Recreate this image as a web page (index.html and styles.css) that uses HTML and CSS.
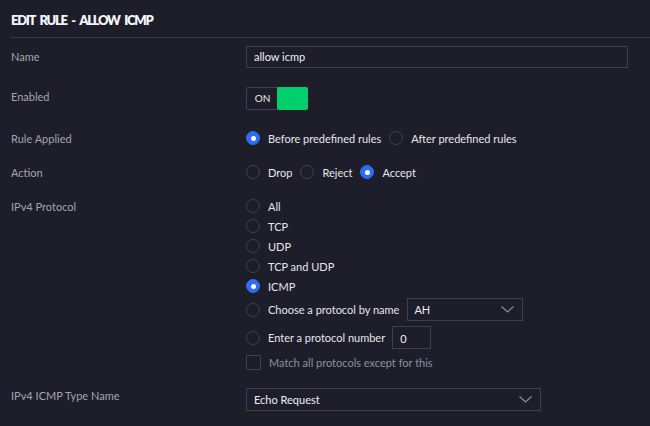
FILE: index.html
```html
<!DOCTYPE html>
<html>
<head>
<meta charset="utf-8">
<link rel="stylesheet" href="styles.css">
</head>
<body>
<div class="panel">
  <h1 class="title">EDIT RULE - ALLOW ICMP</h1>
  <div class="form">
    <div class="row row-name">
      <div class="label">Name</div>
      <div class="control"><div class="textbox wide">allow icmp</div></div>
    </div>
    <div class="row row-enabled">
      <div class="label lbl-0">Enabled</div>
      <div class="control">
        <div class="toggle"><span class="toggle-text">ON</span><span class="toggle-knob"></span></div>
      </div>
    </div>
    <div class="row row-applied">
      <div class="label">Rule Applied</div>
      <div class="control inline">
        <div class="opt"><span class="radio on"></span><span class="opt-text">Before predefined rules</span></div>
        <div class="opt"><span class="radio"></span><span class="opt-text">After predefined rules</span></div>
      </div>
    </div>
    <div class="row row-action">
      <div class="label">Action</div>
      <div class="control inline">
        <div class="opt"><span class="radio"></span><span class="opt-text">Drop</span></div>
        <div class="opt"><span class="radio"></span><span class="opt-text">Reject</span></div>
        <div class="opt"><span class="radio on"></span><span class="opt-text">Accept</span></div>
      </div>
    </div>
    <div class="row row-proto">
      <div class="label">IPv4 Protocol</div>
      <div class="control stack">
        <div class="opt"><span class="radio"></span><span class="opt-text">All</span></div>
        <div class="opt"><span class="radio"></span><span class="opt-text">TCP</span></div>
        <div class="opt"><span class="radio"></span><span class="opt-text">UDP</span></div>
        <div class="opt"><span class="radio"></span><span class="opt-text">TCP and UDP</span></div>
        <div class="opt"><span class="radio on"></span><span class="opt-text">ICMP</span></div>
        <div class="opt opt-choose"><span class="radio"></span><span class="opt-text">Choose a protocol by name</span>
          <div class="select sel-ah"><span>AH</span>
            <svg class="chev" width="13" height="7" viewBox="0 0 13 7"><path d="M0.5 0.5 L6.5 6 L12.5 0.5" fill="none" stroke="#8d929c" stroke-width="1.1"/></svg>
          </div>
        </div>
        <div class="opt opt-enter"><span class="radio"></span><span class="opt-text">Enter a protocol number</span>
          <div class="textbox num">0</div>
        </div>
        <div class="opt opt-check"><span class="checkbox"></span><span class="opt-text dim">Match all protocols except for this</span></div>
      </div>
    </div>
    <div class="row row-icmp">
      <div class="label lbl-up">IPv4 ICMP Type Name</div>
      <div class="control">
        <div class="select sel-echo"><span>Echo Request</span>
          <svg class="chev" width="13" height="7" viewBox="0 0 13 7"><path d="M0.5 0.5 L6.5 6 L12.5 0.5" fill="none" stroke="#8d929c" stroke-width="1.1"/></svg>
        </div>
      </div>
    </div>
  </div>
</div>
</body>
</html>
```
FILE: styles.css
```css
html, body {
  margin: 0;
  padding: 0;
  background: #1e1e2b;
}
body {
  width: 650px;
  height: 426px;
  overflow: hidden;
  font-family: Lato, "Noto Sans", sans-serif;
  font-size: 11px;
  color: #e4e6ea;
}
.panel {
  padding-left: 11px;
}
.title {
  margin: 0;
  padding: 12px 0 8px 0;
  font-size: 13px;
  line-height: 17px;
  font-weight: 800;
  letter-spacing: -1.3px;
  word-spacing: 3px;
  color: #f4f5f7;
  border-bottom: 1px solid #393b48;
}
.form {
  display: flex;
  flex-direction: column;
}
.row {
  display: grid;
  grid-template-columns: 235px 1fr;
  align-items: start;
}
.label {
  color: #a1a5ae;
  line-height: 20px;
  margin-top: 1px;
  margin-bottom: -1px;
}
.lbl-0 { margin-top: 0; margin-bottom: 0; }
.lbl-up { margin-top: -2px; margin-bottom: 0; }
.row-name { margin-top: 8px; }
.row-enabled { margin-top: 19px; }
.row-applied { margin-top: 18px; }
.row-action { margin-top: 14px; }
.row-proto { margin-top: 14px; }
.row-icmp { margin-top: 16px; }

.textbox {
  box-sizing: border-box;
  border: 1px solid #3a424e;
  height: 22px;
  line-height: 20px;
  padding-left: 7px;
  color: #eef0f2;
}
.wide { width: 382px; }
.num {
  width: 39px;
  height: 23px;
  line-height: 23px;
  margin-left: 7px;
}

.toggle {
  display: flex;
  width: 62px;
  height: 23px;
  box-sizing: border-box;
  border: 1px solid #3d4450;
  border-radius: 2px;
}
.toggle-text {
  width: 29px;
  line-height: 21px;
  text-align: center;
  font-size: 10px;
  color: #e8eaed;
  padding-left: 1px;
}
.toggle-knob {
  flex: 1;
  margin: -1px -1px -1px 0;
  background: #00cf6b;
  border-radius: 2px;
}

.control.inline {
  display: flex;
  gap: 8px;
}
.control.stack {
  display: flex;
  flex-direction: column;
}
.opt {
  display: flex;
  align-items: center;
  height: 20px;
}
.opt-text {
  margin-left: 8px;
  white-space: nowrap;
}
.dim { color: #8c919b; }
.radio {
  box-sizing: border-box;
  width: 14px;
  height: 14px;
  border-radius: 50%;
  border: 1px solid #3b4350;
  flex: none;
}
.radio.on {
  background: #2e6cf5;
  border-color: #2e6cf5;
  display: flex;
  align-items: center;
  justify-content: center;
}
.radio.on::after {
  content: "";
  width: 5px;
  height: 5px;
  border-radius: 50%;
  background: #ffffff;
}
.opt-choose {
  height: 23px;
  margin-top: 2px;
}
.opt-enter {
  height: 23px;
  margin-top: 5px;
}
.opt-check {
  margin-top: 3px;
}
.checkbox {
  box-sizing: border-box;
  width: 15px;
  height: 15px;
  border: 1px solid #3b4350;
  border-radius: 1px;
  flex: none;
}

.select {
  box-sizing: border-box;
  height: 23px;
  border: 1px solid #3a424e;
  display: flex;
  align-items: center;
  justify-content: space-between;
  padding: 0 8px 0 6px;
  color: #eef0f2;
}
.sel-ah {
  width: 116px;
  margin-left: 8px;
}
.sel-echo {
  width: 295px;
  padding-left: 7px;
}
.chev { display: block; }
```
